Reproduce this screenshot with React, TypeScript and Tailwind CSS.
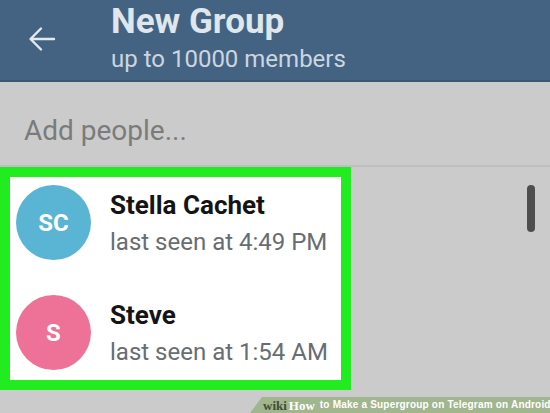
type Contact = {
  initials: string;
  name: string;
  status: string;
  color: string;
};

const contacts: Contact[] = [
  {
    initials: "SC",
    name: "Stella Cachet",
    status: "last seen at 4:49 PM",
    color: "bg-[#5ab4d4]",
  },
  {
    initials: "S",
    name: "Steve",
    status: "last seen at 1:54 AM",
    color: "bg-[#ee7197]",
  },
];

function BackArrow() {
  return (
    <svg width="28" height="26" viewBox="0 0 28 26" fill="none" className="text-[#e3e9ef]">
      <path
        d="M26 13H3M13 2.5L2.5 13L13 23.5"
        stroke="currentColor"
        strokeWidth="2.4"
        strokeLinecap="round"
        strokeLinejoin="round"
      />
    </svg>
  );
}

export default function App() {
  return (
    <div className="w-[550px] h-[413px] overflow-hidden bg-[#cbcbcb] font-['Roboto',sans-serif] flex flex-col">
      <header className="h-[82px] shrink-0 bg-[#446382] border-b-2 border-[#3a5672] flex">
        <div className="w-[111px] flex items-start pt-[26px] pl-[28px]">
          <BackArrow />
        </div>
        <div className="pt-[2px]">
          <h1 className="text-[35px] leading-[40px] font-bold text-[#dfe6ec]">New Group</h1>
          <p className="mt-[3px] text-[24px] leading-[28px] text-[#cbd6e0]">up to 10000 members</p>
        </div>
      </header>

      <div className="h-[85px] shrink-0 border-b-2 border-[#bfbfbf] pl-[24px] pt-[33px]">
        <p className="text-[28px] leading-[32px] text-[#7b7b7b]">Add people...</p>
      </div>

      <div className="flex h-[223px] shrink-0">
        <div className="w-[351px] border-[10px] border-[#20ec20] bg-white flex flex-col gap-[35px] pt-[8px] pl-[6px]">
          {contacts.map((c) => (
            <div key={c.name} className="flex items-center gap-[19px]">
              <div
                className={`w-[75px] h-[75px] rounded-full ${c.color} flex items-center justify-center text-white text-[24px] font-bold`}
              >
                {c.initials}
              </div>
              <div className="flex flex-col gap-[8px]">
                <span className="text-[26px] leading-[30px] font-bold text-[#141414]">{c.name}</span>
                <span className="text-[24px] leading-[28px] text-[#676d72]">{c.status}</span>
              </div>
            </div>
          ))}
        </div>
        <div className="flex-1" />
        <div className="mt-[18px] mr-[15px] w-[8px] h-[47px] rounded-full bg-[#4e4e4e]" />
      </div>

      <div className="mt-[7px] h-[16px] flex justify-end">
        <div className="w-[300px] h-full bg-[#a1b58e] [clip-path:polygon(4%_0,100%_0,100%_100%,0_100%)] flex items-center pl-[13px] gap-[2px] font-['Liberation_Sans',sans-serif] text-[10px] leading-none font-bold text-white whitespace-nowrap">
          <span className="font-['Liberation_Serif',serif] text-[#3f4d36] text-[13px]">wiki</span>
          <span className="font-['Liberation_Serif',serif] text-[13px]">How</span>
          <span className="ml-[3px] tracking-[0.2px]">to Make a Supergroup on Telegram on Android</span>
        </div>
      </div>
    </div>
  );
}
